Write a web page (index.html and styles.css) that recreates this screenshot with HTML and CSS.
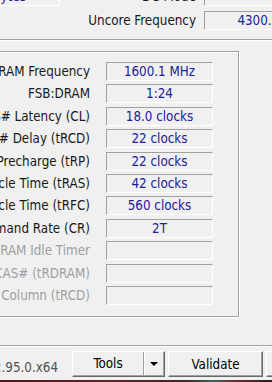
FILE: index.html
```html
<!DOCTYPE html>
<html lang="en">
<head>
<meta charset="UTF-8">
<meta name="viewport" content="width=device-width, initial-scale=1.0">
<title>CPU-Z Memory</title>
<link rel="stylesheet" href="styles.css">
</head>
<body>

<div class="window">

  <div class="general">
    <div class="gen-row first">
      <div class="field size"><span class="value">32 GBytes</span></div>
      <div class="gen-label">DC Mode</div>
      <div class="field gen-field"></div>
    </div>
    <div class="gen-row">
      <div class="gen-gap"></div>
      <div class="gen-label">Uncore Frequency</div>
      <div class="field gen-field"><span class="value">4300.0 MHz</span></div>
    </div>
  </div>

  <div class="timings">
    <div class="row">
      <div class="label"><span>DRAM Frequency</span></div>
      <div class="field"><span class="value">1600.1 MHz</span></div>
    </div>
    <div class="row">
      <div class="label"><span>FSB:DRAM</span></div>
      <div class="field"><span class="value">1:24</span></div>
    </div>
    <div class="row">
      <div class="label"><span>CAS# Latency (CL)</span></div>
      <div class="field"><span class="value">18.0 clocks</span></div>
    </div>
    <div class="row">
      <div class="label"><span>RAS# to CAS# Delay (tRCD)</span></div>
      <div class="field"><span class="value">22 clocks</span></div>
    </div>
    <div class="row">
      <div class="label"><span>RAS# Precharge (tRP)</span></div>
      <div class="field"><span class="value">22 clocks</span></div>
    </div>
    <div class="row">
      <div class="label"><span>Cycle Time (tRAS)</span></div>
      <div class="field"><span class="value">42 clocks</span></div>
    </div>
    <div class="row">
      <div class="label"><span>Row Refresh Cycle Time (tRFC)</span></div>
      <div class="field"><span class="value">560 clocks</span></div>
    </div>
    <div class="row">
      <div class="label"><span>Command Rate (CR)</span></div>
      <div class="field"><span class="value">2T</span></div>
    </div>
    <div class="row">
      <div class="label off"><span>DRAM Idle Timer</span></div>
      <div class="field"></div>
    </div>
    <div class="row">
      <div class="label off"><span>Total CAS# (tRDRAM)</span></div>
      <div class="field"></div>
    </div>
    <div class="row">
      <div class="label off"><span>Row To Column (tRCD)</span></div>
      <div class="field"></div>
    </div>
  </div>

  <div class="footer">
    <div class="version"><span>CPU-Z&nbsp;&nbsp;Ver. 2.95.0.x64</span></div>
    <div class="split">
      <button class="split-main">Tools</button>
      <button class="split-arrow">
        <svg width="8" height="4" viewBox="0 0 8 4"><polygon points="0,0 8,0 4,4" fill="#000"/></svg>
      </button>
    </div>
    <button class="btn validate">Validate</button>
    <button class="btn close">Close</button>
  </div>

  <div class="desktop"></div>

</div>

</body>
</html>
```

FILE: styles.css
```css
body {
  margin: 0;
  background-color: #f0f0f0;
  font-family: "DejaVu Sans Condensed", "DejaVu Sans", sans-serif;
  font-stretch: condensed;
  font-size: 13.3px;
  color: #1a1a1a;
  overflow: hidden;
}

.window {
  width: 272px;
  height: 382px;
  overflow: hidden;
}

/* top part, General box (cut off) */
.general {
  height: 40px;
  box-sizing: border-box;
  border-bottom: 1px solid #a0a0a0;
  box-shadow: 0 1px 0 #fff;
  display: flex;
  flex-direction: column;
  gap: 5px;
}
.gen-row {
  display: flex;
  align-items: center;
  height: 19px;
  margin-left: -70px;
  flex-shrink: 0;
}
.gen-row.first {
  margin-top: -13px;
}
.gen-gap {
  width: 130px;
  flex-shrink: 0;
}
.gen-label {
  width: 136px;
  padding-right: 8px;
  text-align: right;
  white-space: nowrap;
  flex-shrink: 0;
}

.field {
  box-sizing: border-box;
  height: 19px;
  border: 1px solid;
  border-color: #a0a0a0 #fff #fff #a0a0a0;
  display: flex;
  align-items: center;
  justify-content: center;
  white-space: nowrap;
  overflow: hidden;
  flex-shrink: 0;
}
.size {
  width: 130px;
}
.gen-field {
  width: 138px;
}
.value {
  color: #202098;
}

/* Timings box */
.timings {
  box-sizing: border-box;
  width: 269px;
  height: 266px;
  margin: 11px 0 0 -30px;
  padding-top: 10px;
  border: 1px solid #a0a0a0;
  box-shadow: inset 1px 1px 0 #fff, 1px 1px 0 #fff;
  display: flex;
  flex-direction: column;
  gap: 3.4px;
}
.row {
  display: flex;
  align-items: center;
  height: 19px;
  flex-shrink: 0;
}
.label {
  width: 119px;
  margin-right: 16px;
  display: flex;
  justify-content: flex-end;
  white-space: nowrap;
  flex-shrink: 0;
}
.label.off {
  color: #a0a0a0;
}
.row .field {
  width: 107px;
}

/* bottom bar */
.footer {
  box-sizing: border-box;
  height: 35px;
  margin-top: 28px;
  padding-top: 5px;
  border-top: 1px solid #a0a0a0;
  box-shadow: inset 0 1px 0 #fff;
  display: flex;
  align-items: flex-start;
}
.version {
  box-sizing: border-box;
  width: 58px;
  height: 26px;
  padding-top: 6px;
  margin-right: 14px;
  display: flex;
  align-items: center;
  justify-content: flex-end;
  white-space: nowrap;
  color: #505050;
  flex-shrink: 0;
}

.btn, .split {
  box-sizing: border-box;
  height: 26px;
  border: 1px solid;
  border-color: #fff #696969 #696969 #fff;
  box-shadow: inset -1px -1px 0 #a0a0a0;
  background-color: #f0f0f0;
  flex-shrink: 0;
}
.btn {
  font: inherit;
  color: #000;
  padding: 0;
}
.split {
  width: 93px;
  display: flex;
}
.split-main, .split-arrow {
  border: none;
  background: none;
  font: inherit;
  color: #000;
  padding: 0;
  height: 23px;
  display: flex;
  align-items: center;
  justify-content: center;
}
.split-main {
  width: 70px;
}
.split-arrow {
  width: 20px;
  border-left: 1px solid #a0a0a0;
  box-shadow: inset 1px 0 0 #fff;
}
.validate {
  width: 95px;
  margin-left: 3px;
}
.close {
  width: 95px;
  margin-left: 3px;
}

.desktop {
  height: 2px;
  background: linear-gradient(90deg, #4a1818, #5e2420 40%, #3a2626 68%, #2c6a5c 78%, #6a3030 86%, #2a1a1a);
}
```
